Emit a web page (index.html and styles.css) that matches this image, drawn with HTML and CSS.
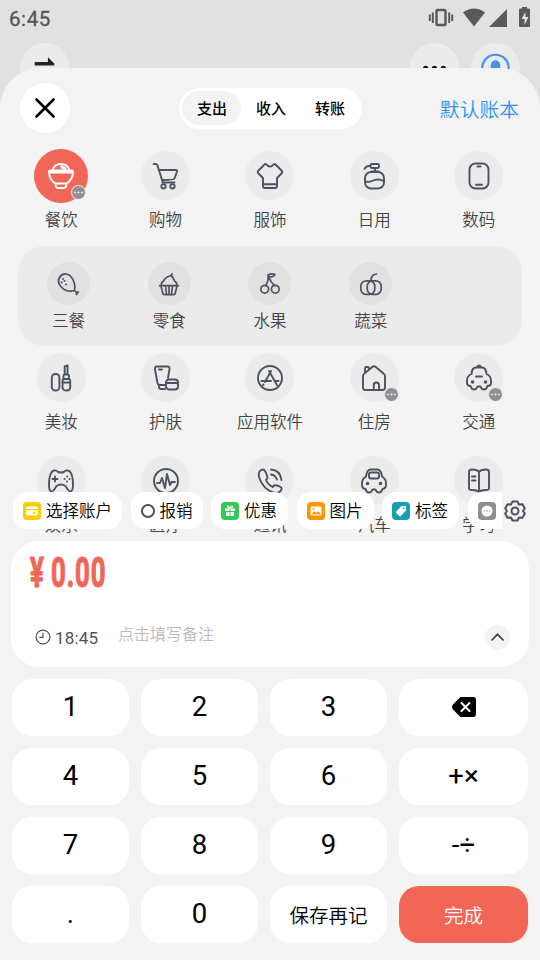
FILE: index.html
```
<!DOCTYPE html>
<html lang="zh-CN">
<head>
<meta charset="utf-8">
<title>记一笔</title>
<link rel="stylesheet" href="styles.css">
</head>
<body>
<div class="status">
  <span class="clock">6:45</span>
  <svg class="status-icons" viewBox="0 0 110 28" width="110" height="28">
    <g fill="none" stroke="#5a5a5a" stroke-width="2"><rect x="12.500" y="6" width="9" height="15" rx="1" stroke-width="2.400"/><path d="M8.800 8.500v10.500M25.200 8.500v10.500M5.800 10.500v6.500M28.200 10.500v6.500"/></g>
    <path fill="#5a5a5a" d="M39 8.500Q50 .500 61 8.500L50 22.500zM65 23L83 5v18z"/>
    <path fill="#5a5a5a" fill-rule="evenodd" d="M98 4.500v-1.500h5v1.500h2q1 0 1 1v16.500q0 1-1 1h-9q-1 0-1-1v-16.500q0-1 1-1zM101.500 8l-4 7h3v6l4-8h-3z"/>
  </svg>
</div>
<div class="backbar">
  <span class="round"><svg viewBox="-25 -25 50 50"><path fill="#222" d="M-10-5.500H3.500V-10.500L10-4V-2H-10z"/></svg></span>
  <span class="round push"><svg viewBox="-25 -25 50 50"><g fill="#111"><circle cx="-9" cy="1" r="2.700"/><circle cy="1" r="2.700"/><circle cx="9" cy="1" r="2.700"/></g></svg></span>
  <span class="round"><svg viewBox="-25 -25 50 50"><circle cy=".5" r="13.500" fill="none" stroke="#4392ea" stroke-width="2.200"/><ellipse cy="-1.500" rx="5" ry="6" fill="#4392ea"/></svg></span>
</div>
<main class="sheet">
  <header class="head">
    <button class="close"><svg viewBox="-25 -25 50 50"><path d="M-8.500-8.500L8.500 8.500M8.500-8.500L-8.500 8.500" stroke="#000" stroke-width="2.600" stroke-linecap="round"/></svg></button>
    <nav class="tabs"><span class="tab on">支出</span><span class="tab">收入</span><span class="tab">转账</span></nav>
    <a class="book">默认账本</a>
  </header>
  <section class="list">
    <div class="row">
      <div class="item selected"><span class="disc"><svg viewBox="-14 -14 28 28"><path d="M-8.500-5.500C-7.500-9.500-4-12 0-12S7.500-9.500 8.500-5.500M0-9.500Q3-9.500 4.500-7.500L1-8M-12-4.500Q-12-5.500-10.500-5.500H10.500Q12-5.500 12-4.500C12 2 9 5.500 5.500 7.500H-5.500C-9 5.500-12 2-12-4.500zM-11.500-3.500H11.500M-5.500 7.500Q-5.500 12-3 12H3Q5.500 12 5.500 7.500"/></svg><i class="more"></i></span><span>餐饮</span></div>
      <div class="item"><span class="disc"><svg viewBox="-14 -14 28 28"><path d="M-12.300-12H-10.500Q-9-12-8.500-10.500L-3.500 5.500M-7.500-6H10Q11.500-6 11-4.500L8.500 2.500Q8 4-4 4M-3.500 6.500H8.500"/><circle cx="-2.500" cy="10.300" r="2.200"/><circle cx="6.500" cy="10.300" r="2.200"/></svg></span><span>购物</span></div>
      <div class="item"><span class="disc"><svg viewBox="-14 -14 28 28"><path d="M-5-12Q-4-12.500-3-11Q0-8 3-11Q4-12.500 5-12L11.500-5.500Q13-4 11.500-2.500L7 2V10Q7 12 5 12H-5Q-7 12-7 10V2L-11.500-2.500Q-13-4-11.500-5.500zM-6.500 8.300H6.500"/></svg></span><span>服饰</span></div>
      <div class="item"><span class="disc"><svg viewBox="-14 -14 28 28"><rect x="-3.500" y="-12" width="8.500" height="4" rx="1.500"/><rect x="-9" y="-4" width="19" height="16.500" rx="6"/><path d="M-9.500-7Q-8-10.500-4-10M1-7.500V-4.500M-2.500-4.500H4.500M-9 5.500Q-5 6.500-2 5Q4 2 9.500 5"/></svg></span><span>日用</span></div>
      <div class="item"><span class="disc"><svg viewBox="-14 -14 28 28"><rect x="-9.500" y="-12.500" width="19" height="25" rx="6"/><path d="M-1.500-9.500h3M-3 8.700H3"/></svg></span><span>数码</span></div>
    </div>
    <div class="sub">
      <div class="item"><span class="disc"><svg viewBox="-14 -14 28 28"><path d="M6.500 6.500C1 8.500-6 6-9-.500C-11-5-7-10.500-2-10C4-9.500 8 0 6.500 6.500L9.500 9.500M9 8h1.500M8.500 9v1.500"/><path class="dots" d="M-5-5h.1M-6.500-1.500h.1M-2 .5h.1M-3.500-3h.1"/></svg></span><span>三餐</span></div>
      <div class="item"><span class="disc"><svg viewBox="-14 -14 28 28"><path d="M-7.500 1Q-8-1.500-5.500-3Q-3.500-7 1-8L3-10Q2-7.500 4-6.500Q4.500-4 6-2.500Q8.500-1 7.500 1M-9.500 1.700H9.500M-8 2L-6 10Q-5.500 10.700-4 10.700H4Q5.500 10.700 6 10L8 2M-3.500 2L-2.500 10M0 2V10M3.500 2L2.500 10"/></svg></span><span>零食</span></div>
      <div class="item"><span class="disc"><svg viewBox="-14 -14 28 28"><circle cx="-5.300" cy="5.200" r="3.900"/><circle cx="5.300" cy="5.200" r="3.900"/><path d="M-4.500 1.500Q-1-3-2-9Q.5-2 4.500 1.500M-2-9Q1-11 5-9.500Q3-6-1-7.500"/></svg></span><span>水果</span></div>
      <div class="item"><span class="disc"><svg viewBox="-14 -14 28 28"><rect x="-10.200" y="-3.200" width="14" height="13.600" rx="5.500"/><rect x="-3.800" y="-3.200" width="14" height="13.600" rx="5.500"/><path d="M0-3.500Q0-9.500 5.500-10"/></svg></span><span>蔬菜</span></div>
    </div>
    <div class="row">
      <div class="item"><span class="disc"><svg viewBox="-14 -14 28 28"><rect x="-9.200" y="-4" width="7.600" height="16.500" rx="3.500"/><path d="M1.500 3Q1.500 1 3 1H7.500Q9.200 1 9.200 3V9Q9.200 12.500 6 12.500H5Q1.500 12.500 1.500 9zM1.500 4.500H9M2.500 1V-2Q2.500-3.500 4-3.500H6.500Q8-3.500 8-2V1M3.700-3.500V-11.500L6.500-12.500V-3.500"/></svg></span><span>美妆</span></div>
      <div class="item"><span class="disc"><svg viewBox="-14 -14 28 28"><path d="M-1 7H-6Q-8 7-8.500 5L-11-8.500Q-11.500-11.500-9-11.500H1.500Q4-11.500 3.500-9L2 0M-7 7.500V9Q-7 11-5 11H-1M-7-8.500H-4"/><rect x="0" y="1.500" width="12" height="10" rx="3"/><path d="M0 5H12"/></svg></span><span>护肤</span></div>
      <div class="item"><span class="disc"><svg viewBox="-14 -14 28 28"><circle r="12"/><path d="M1-7L-5 4M-6.500 6.500L-7 7M-1-7L7 7M-8.500 3H1M5 3H8.500"/></svg></span><span>应用软件</span></div>
      <div class="item"><span class="disc"><svg viewBox="-14 -14 28 28"><path d="M-8.500 12Q-11 12-11 9.500V-2Q-11-3.500-9.500-4.500L-1.500-11.200Q0-12.200 1.500-11.200L9.500-4.500Q11-3.500 11-2V9.500Q11 12 8.500 12zM-9-5V-9.500Q-9-11-7.500-11H-6.500Q-5-11-5-9M-.2 11.500V7Q-.2 4.500 2.300 4.500T5 7V11.500"/></svg><i class="more"></i></span><span>住房</span></div>
      <div class="item"><span class="disc"><svg viewBox="-14 -14 28 28"><path d="M-3-10.500H3Q7-10.500 7.500-4Q12-2 12 2.500V5Q12 8 8.500 8Q7.500 11.500 5 11.500T1.500 8.500H-1.500Q-2.500 11.500-5 11.500T-8.500 8Q-12 8-12 5V2.500Q-12-2-7.500-4Q-7-10.500-3-10.500zM-2-11Q0-14 2-11M-3-1.500H3"/><path class="dots big" d="M-6.500 4h.1M6.500 4h.1"/></svg><i class="more"></i></span><span>交通</span></div>
    </div>
    <div class="row last">
      <div class="item"><span class="disc"><svg viewBox="-14 -14 28 28"><path d="M-7-10.500Q-4.500-11-3-9Q0-8 3-9Q4.500-11 7-10.500Q12-9 12 4Q12 10 9.500 10.500Q8 11 4.500 5Q0 2-4.500 5Q-8 11-9.500 10.500Q-12 10-12 4Q-12-9-7-10.500zM-8.500-2h5M-6-4.500v5"/><path class="dots" d="M6-4.500h.1M6 .5h.1M3.500-2h.1M8.500-2h.1"/></svg></span><span>娱乐</span></div>
      <div class="item"><span class="disc"><svg viewBox="-14 -14 28 28"><circle r="12"/><path d="M-9 2H-6L-4-3L-1 7L1-7L4 4L5.500 1H9"/></svg><i class="more"></i></span><span>医疗</span></div>
      <div class="item"><span class="disc"><svg viewBox="-14 -14 28 28"><path d="M-9-11Q-12-9-11-4Q-7 9 5 12Q9 12.500 11 9.500Q12.500 7.500 10.500 6Q7 3.500 4 4.500L3 6Q-2 4-4-1L-2.500-3Q-3-7-5-10Q-6.500-12.500-9-11zM1-11.500Q10-11 11.500-1M1-6.500Q5.500-6 7-1.500"/></svg></span><span>通讯</span></div>
      <div class="item"><span class="disc"><svg viewBox="-14 -14 28 28"><path d="M-3.500-11.500H3.500Q7-11.500 8-4.500Q12-2 12 2V4Q12 7.500 8.500 8Q7.500 11.500 5 11.500T1.500 8.500H-1.500Q-2.500 11.500-5 11.500T-8.500 8Q-12 7.500-12 4V2Q-12-2-8-4.500Q-7-11.500-3.500-11.500z"/><rect x="-5" y="-8.500" width="10" height="6" rx="2"/><path class="dots big" d="M-6.500 2.500h.1M6.500 2.500h.1"/></svg></span><span>汽车</span></div>
      <div class="item"><span class="disc"><svg viewBox="-14 -14 28 28"><path d="M0-9Q-2-11.500-7-11.500Q-10-11.500-10-9V7.500Q-10 9-7 9Q-2 9 0 11Q2 9 7 9Q10 9 10 7.500V-9Q10-11.500 7-11.500Q2-11.500 0-9zV10M-7-4.500H-3.500M-7-.5H-3.500"/></svg><i class="more"></i></span><span>学习</span></div>
    </div>
    <div class="toolbar">
      <div class="chips">
        <span class="chip"><svg class="ico" viewBox="0 0 18 18"><rect width="18" height="18" rx="4" fill="#fc0"/><rect x="3" y="4.500" width="12" height="9" rx="2" fill="#fff"/><path d="M3 7.700h12M9.500 11h3" stroke="#fc0" stroke-width="1.300"/></svg>选择账户</span>
        <span class="chip"><i class="ring"></i>报销</span>
        <span class="chip wide"><svg class="ico" viewBox="0 0 18 18"><rect width="18" height="18" rx="4" fill="#34c759"/><path fill="#fff" d="M4 6.500h10V9H4zM5 10h8v4H5z"/><path d="M9 6.500Q5.500 5.500 6.500 4T9 6.500Q12.500 5.500 11.500 4T9 6.500" fill="none" stroke="#fff"/><path d="M9 6.500V14" stroke="#34c759" stroke-width=".8"/></svg>优惠</span>
        <span class="chip wide"><svg class="ico" viewBox="0 0 18 18"><rect width="18" height="18" rx="4" fill="#ff9500"/><rect x="3.500" y="4.500" width="11" height="9" rx="1.500" fill="#fff"/><path d="M4.500 12.300l3-3 2 1.500 2-1.500 2 3z" fill="#ff9500"/><circle cx="6.500" cy="7" r="1" fill="#ff9500"/></svg>图片</span>
        <span class="chip wide"><svg class="ico" viewBox="0 0 18 18"><rect width="18" height="18" rx="4" fill="#1a9eb2"/><path d="M9.500 4H13q1 0 1 1v3.500L9 13.700q-1 1-2 0L4.500 11.200q-1-1 0-2z" fill="#fff"/><circle cx="11.800" cy="6.300" r=".9" fill="#1a9eb2"/></svg>标签</span>
        <span class="chip wide"><svg class="ico" viewBox="0 0 18 18"><rect width="18" height="18" rx="4" fill="#8e8e93"/><circle cx="9" cy="9" r="5.500" fill="#fff"/><path d="M6 9h1.300M8.400 9h1.300M10.800 9h1.300" stroke="#8e8e93" stroke-width="1.200"/></svg></span>
      </div>
      <svg class="gear" viewBox="-12 -12 24 24"><path d="M-2.500-9.500H2.500L4-6.500L7.500-6.800L9.800-2.500L8 0L9.800 2.500L7.500 6.800L4 6.500L2.500 9.500H-2.500L-4 6.500L-7.500 6.800L-9.800 2.500L-8 0L-9.800-2.500L-7.500-6.800L-4-6.500z"/><circle r="3.500"/></svg>
    </div>
  </section>
  <section class="card">
    <div class="amount"><span class="yen">¥</span><span class="sum">0.00</span></div>
    <div class="note">
      <svg class="time-icon" viewBox="0 0 16 16"><circle cx="8" cy="8" r="6.900"/><path d="M8 3.800v4.500H4.300"/></svg>
      <span class="time">18:45</span><span class="hint">点击填写备注</span>
      <span class="up"><svg viewBox="-12.500 -12.500 25 25"><path d="M-6 3L0-3.200L6 3" fill="none" stroke="#444" stroke-width="1.700"/></svg></span>
    </div>
  </section>
  <section class="keys">
    <button>1</button><button>2</button><button>3</button><button><svg class="del" viewBox="0 0 24 20"><path d="M8.500 0H21q3 0 3 3v14q0 3-3 3H8.500L1 12.500Q-1 10 1 7.500z"/><path d="M9.500 6l8 8M17.500 6l-8 8" stroke="#fff" stroke-width="2" stroke-linecap="round"/></svg></button>
    <button>4</button><button>5</button><button>6</button><button class="op">+×</button>
    <button>7</button><button>8</button><button>9</button><button class="op">-÷</button>
    <button>.</button><button>0</button><button class="word">保存再记</button><button class="word done">完成</button>
  </section>
</main>
</body>
</html>
```
FILE: styles.css
```
* { box-sizing: border-box; }
body {
  margin: 0;
  width: 540px;
  height: 960px;
  overflow: hidden;
  background: #e1e1e1;
  font-family: "Noto Sans CJK SC", sans-serif;
  font-weight: 350;
}
svg { display: block; }
button { border: 0; padding: 0; background: #fff; font: inherit; color: #000; }

.status { height: 43px; display: flex; justify-content: space-between; padding: 4px 7px 0 9px; }
.clock { font: 400 20.500px/30px Roboto, sans-serif; letter-spacing: .6px; color: #555; -webkit-text-stroke: .3px #555; }
.status-icons { margin-right: -1px; }
.backbar { display: flex; gap: 12px; height: 25px; padding: 0 20.500px 0 20px; }
.round { width: 49px; height: 49px; border-radius: 50%; background: #ebebeb; flex: none; }
.push { margin-left: auto; }

.sheet { position: relative; height: 892px; background: #f3f3f3; border-radius: 40px 40px 0 0; }
.head { height: 70px; display: flex; justify-content: space-between; align-items: center; padding: 10px 21px 0 20px; }
.close { width: 50px; height: 50px; border-radius: 50%; }
.tabs { display: flex; width: 183px; height: 41px; padding: 3px; background: #fff; border-radius: 21px; margin-left: 32px; }
.tab { width: 59px; height: 34px; border-radius: 17px; text-align: center; font-size: 15px; line-height: 34px; font-weight: 500; }
.tab.on { background: #f3f3f3; }
.book { color: #2e90fa; font-size: 19.800px; }

.list { position: relative; height: 403px; overflow: hidden; padding-top: 13px; }
.row { display: grid; grid-template-columns: repeat(5, 104.400px); padding: 0 9px; height: 95px; }
.item { display: flex; flex-direction: column; align-items: center; font-size: 16.500px; line-height: 24px; color: #444; }
.disc { position: relative; width: 49px; height: 49px; margin-bottom: 7px; border-radius: 50%; background: #ebebeb; display: flex; align-items: center; justify-content: center; }
.disc svg { width: 28px; height: 28px; fill: none; stroke: #4c5261; stroke-width: 1.900; stroke-linecap: round; stroke-linejoin: round; flex: none; }
.disc svg .dots { stroke-width: 1.900; }
.disc svg .big { stroke-width: 3.500; }
.selected .disc { width: 54px; height: 54px; margin: -2px 0 4px; background: #f16656; }
.disc .more + svg, .selected .disc svg { stroke: #fff; }
.more { position: absolute; right: 0; bottom: 0; width: 15px; height: 15px; border-radius: 50%; border: 1.500px solid #f3f3f3; background: radial-gradient(circle at 3px 6.500px, #eee 0 .8px, transparent 1.200px), radial-gradient(circle at 6.500px 6.500px, #eee 0 .8px, transparent 1.200px), radial-gradient(circle at 10px 6.500px, #eee 0 .8px, transparent 1.200px), #8f8f94; }
.row + .sub + .row .more, .last .more { bottom: 0; }
.selected .more { right: 2px; bottom: 3px; }
.sub { display: grid; grid-template-columns: repeat(5, 1fr); height: 100px; margin: 0 18px 7px; padding-top: 16px; border-radius: 26px; background: #ebebeb; }
.sub .disc { width: 43px; height: 43px; margin-bottom: 3px; background: #e1e1e1; }
.sub .disc svg { stroke-width: 1.700; }
.sub + .row { height: 103px; }
.last .more { bottom: -1px; }

.toolbar { position: absolute; left: 13px; right: 12px; top: 354px; height: 37px; display: flex; }
.chips { width: 489px; overflow: hidden; display: flex; gap: 8.500px; }
.chip { height: 37px; flex: none; display: flex; align-items: center; gap: 5px; padding: 0 10px; border-radius: 14px; background: #fff; color: #000; font-size: 16.500px; line-height: 37px; }
.chip.wide { width: 77px; }
.ico { width: 18px; height: 18px; flex: none; }
.ring { width: 14px; height: 14px; border: 2px solid #4c5261; border-radius: 50%; flex: none; }
.gear { width: 24px; height: 24px; margin-top: 7px; margin-left: 1px; fill: none; stroke: #4c5261; stroke-width: 2; stroke-linejoin: round; }

.card { height: 126px; margin: 0 11px; background: #fff; border-radius: 28px; padding: 8px 19px 0; }
.amount { display: flex; height: 46px; color: #f16656; font: 700 43px/47px Roboto, sans-serif; -webkit-text-stroke: 1.200px #f16656; }
.yen { width: 21px; transform: scaleX(.6); transform-origin: 0 0; }
.sum { transform: scaleX(.6); transform-origin: 0 0; letter-spacing: 1.500px; }
.note { display: flex; align-items: center; margin-top: 29px; height: 26px; padding-left: 5px; }
.time-icon { width: 16px; height: 16px; fill: none; stroke: #4c5261; stroke-width: 1.200; }
.time { width: 63px; margin-left: 4px; padding-top: 2px; font: 400 17px/26px Roboto, sans-serif; letter-spacing: .2px; color: #4c5261; }
.hint { font-size: 16px; color: #bbb; line-height: 24px; margin-top: -8px; }
.up { width: 25px; height: 25px; border-radius: 50%; background: #f3f3f3; margin-left: auto; }

.keys { display: grid; grid-template-columns: 117px 117px 117px 129px; grid-auto-rows: 57px; gap: 12px; padding: 12px; }
.keys button { border-radius: 20px; font: 400 27.500px/54px Roboto, sans-serif; padding-bottom: 1px; }
.del { width: 24px; height: 20px; margin: 0 auto; }
.keys .word { font: 350 19.500px/54px "Noto Sans CJK SC", sans-serif; padding: 1px 0 0; }
.keys .done { background: #f16656; color: #fff; }
```
